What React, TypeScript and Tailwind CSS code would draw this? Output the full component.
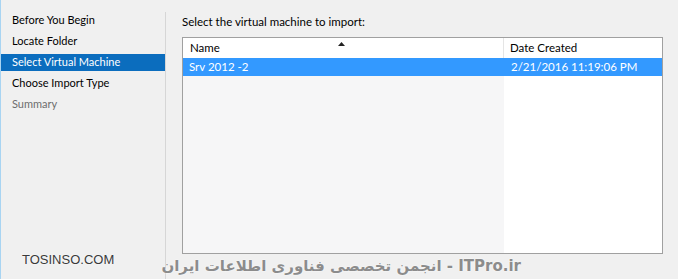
import React from 'react';

const steps = [
  { label: 'Before You Begin', state: 'done' },
  { label: 'Locate Folder', state: 'done' },
  { label: 'Select Virtual Machine', state: 'active' },
  { label: 'Choose Import Type', state: 'todo' },
  { label: 'Summary', state: 'disabled' },
];

export default function App() {
  return (
    <div className="relative flex h-[279px] w-[678px] overflow-hidden border-l border-[#a8d4f2] bg-[#f0f0f0] font-['Lato',sans-serif] text-[11.5px] text-black">
      {/* wizard steps */}
      <div className="mt-[12px] w-[165px] shrink-0 border-r border-[#d6d6d6] text-[11px]">
        <ul className="flex flex-col gap-[4px]">
          {steps.map((s) => (
            <li
              key={s.label}
              className={
                s.state === 'active'
                  ? 'flex h-[17px] items-center bg-[#0b6dbe] pl-[11px] text-white'
                  : s.state === 'disabled'
                  ? 'flex h-[17px] items-center pl-[11px] text-[#6d6d6d]'
                  : 'flex h-[17px] items-center pl-[11px]'
              }
            >
              {s.label}
            </li>
          ))}
        </ul>
      </div>

      {/* content */}
      <div className="flex flex-col pl-[16px] pt-[13px]">
        <div className="h-[18px] leading-[18px]">Select the virtual machine to import:</div>
        <div className="mt-[6px] flex h-[217px] w-[481px] flex-col border border-[#a0a0a0] bg-white">
          <div className="flex h-[20px] items-center">
            <div className="relative flex h-full w-[321px] items-center border-r border-[#e5e5e5] pl-[7px]">
              Name
              <svg className="absolute left-[155px] top-[4px]" width="7" height="4" viewBox="0 0 7 4">
                <path d="M0 4 L3.5 0 L7 4 Z" fill="#222" />
              </svg>
            </div>
            <div className="pl-[6px]">Date Created</div>
          </div>
          <div className="flex h-[18px] items-center bg-[#3399ff] text-white">
            <div className="w-[321px] pl-[6px]">Srv 2012 -2</div>
            <div className="pl-[7px]">2/21/2016 11:19:06 PM</div>
          </div>
          <div className="flex flex-1">
            <div className="w-[321px] bg-[#f6f6f7]" />
            <div className="flex-1" />
          </div>
        </div>
      </div>

      {/* watermarks */}
      <div className="absolute left-[21px] top-[250px] font-['Liberation_Sans',sans-serif] text-[13px] text-[#3a3a3a] [text-shadow:0_0_2px_#fff]">
        TOSINSO.COM
      </div>
      <div
        dir="rtl"
        className="absolute left-[158px] top-[255px] w-[362px] whitespace-nowrap font-['DejaVu_Sans',sans-serif] text-[15px] font-bold text-[#8c8c8c] [text-shadow:0_0_2px_#fff]"
      >
        ITPro.ir - انجمن تخصصی فناوری اطلاعات ایران
      </div>
    </div>
  );
}
